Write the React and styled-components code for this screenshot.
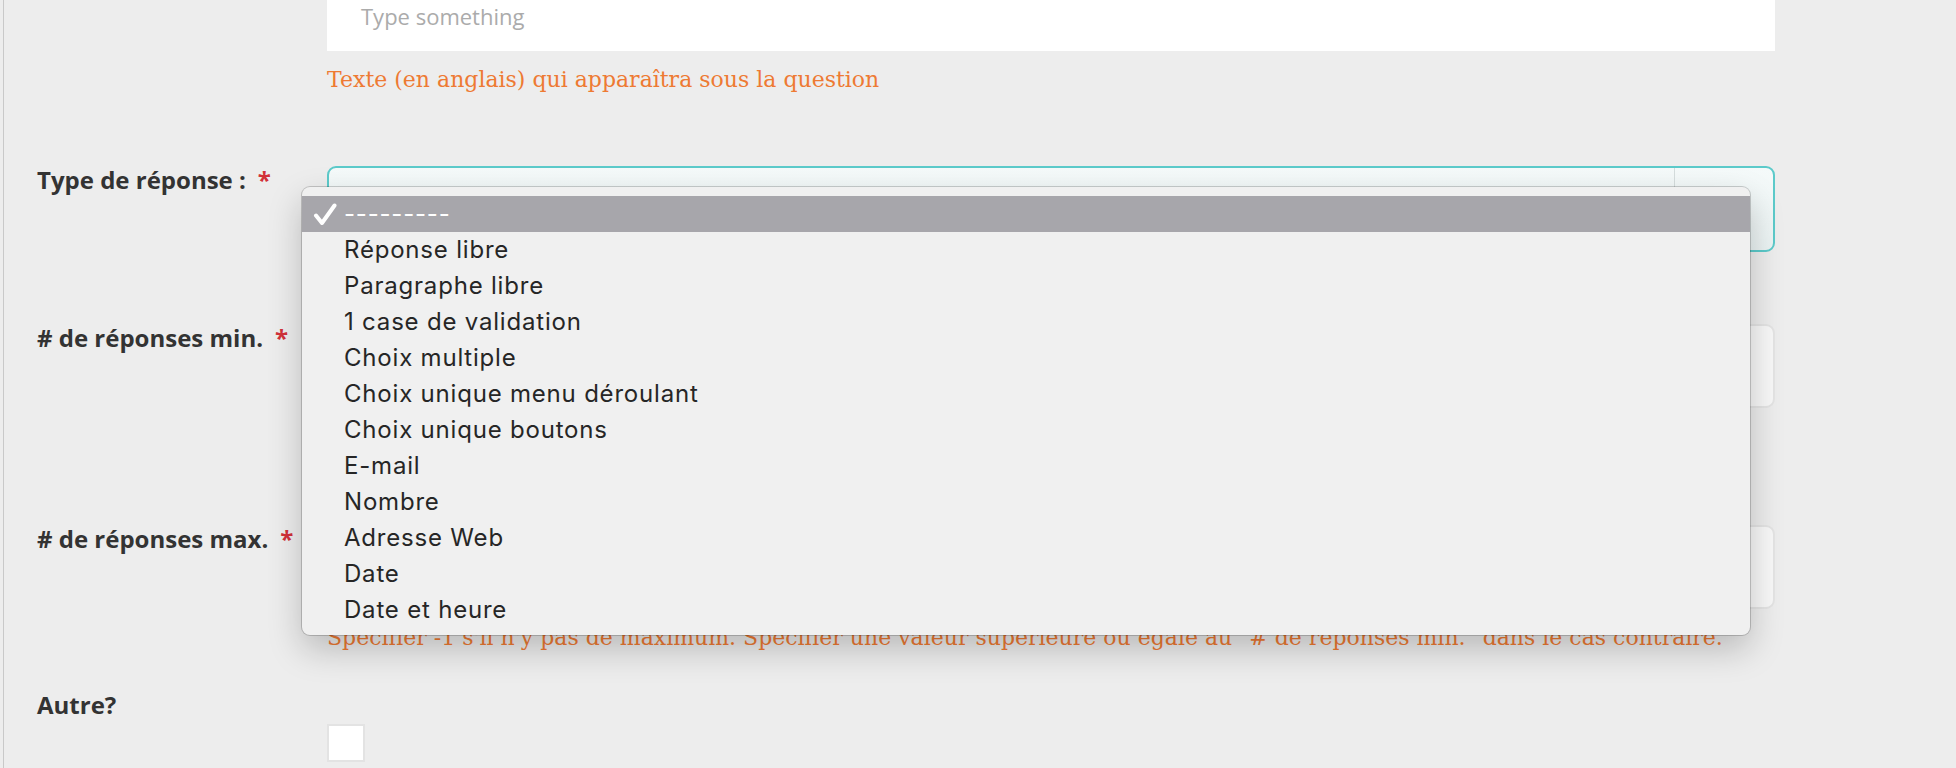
import React from 'react';
import styled, { createGlobalStyle } from 'styled-components';

const GlobalStyle = createGlobalStyle`
  html, body {
    margin:0;
    padding:0;
    background:#ededed;
    overflow:hidden;
  }
  * { box-sizing:border-box; }
`
const Page = styled.div`
  margin-left:3px;
  border-left:1px solid #c9c9c9;
  height:768px;
  padding-left:33px;
  font-family:"Open Sans", sans-serif;
`
const Row = styled.div`
  display:grid;
  grid-template-columns:290px 1448px;
  margin-top:${p => p.$gap || 0}px;
`
const Label = styled.label`
  display:block;
  grid-column:${p => p.$full ? '1 / -1' : 'auto'};
  padding-top:2px;
  font-size:24px;
  line-height:24px;
  font-weight:700;
  color:#333;
`
const Star = styled.span`
  color:#d23139;
  margin-left:12px;
`
const Field = styled.div`
  position:relative;
  grid-column:2;
`
const TextArea = styled.textarea`
  display:block;
  width:100%;
  height:51px;
  border:0;
  resize:none;
  outline:none;
  background:#fff;
  padding:0 34px;
  font-family:"Open Sans", sans-serif;
  font-size:22px;
  line-height:32px;
  color:#333;
  &::placeholder { color:#ababab; }
`
const Help = styled.p`
  margin:15px 0 0;
  font-family:"DejaVu Serif", serif;
  font-size:22px;
  line-height:28px;
  color:#ee7a33;
  white-space:nowrap;
`
const SelectBox = styled.div`
  display:flex;
  justify-content:flex-end;
  height:86px;
  border:2px solid #5ccaca;
  border-radius:9px;
  background:linear-gradient(#f5fafa, #ebf3f3);
`
const ArrowZone = styled.div`
  width:99px;
  border-left:1px solid #d5dddd;
`
const Input = styled.input`
  display:block;
  width:100%;
  height:84px;
  border:2px solid #e4e4e4;
  border-radius:9px;
  background:#f8f8f8;
  outline:none;
`
const Checkbox = styled.input`
  appearance:none;
  display:block;
  margin:7px 0 0;
  width:38px;
  height:38px;
  background:#fff;
  border:2px solid #e3e3e3;
  border-radius:0;
`
const Menu = styled.ul`
  position:absolute;
  left:-25px;
  top:21px;
  width:1448px;
  margin:0;
  padding:9px 0 7px;
  list-style:none;
  background:#f0f0f0;
  border-radius:8px;
  box-shadow:0 0 0 1px rgba(0,0,0,0.18), 0 14px 34px rgba(0,0,0,0.22);
  z-index:5;
`
const Option = styled.li`
  position:relative;
  height:36px;
  line-height:35px;
  padding-left:42px;
  font-family:Inter, "Liberation Sans", sans-serif;
  font-size:24px;
  letter-spacing:0.8px;
  color:${p => p.$selected ? '#fff' : '#262626'};
  background:${p => p.$selected ? '#a7a6ab' : 'transparent'};
`
const Check = styled.svg`
  position:absolute;
  left:11px;
  top:7px;
`

const options = [
    '---------',
    'Réponse libre',
    'Paragraphe libre',
    '1 case de validation',
    'Choix multiple',
    'Choix unique menu déroulant',
    'Choix unique boutons',
    'E-mail',
    'Nombre',
    'Adresse Web',
    'Date',
    'Date et heure',
]

const App = () => {
    return (
        <>
        <GlobalStyle />
        <Page>
            <Row>
                <Field>
                    <TextArea placeholder="Type something" />
                    <Help>Texte (en anglais) qui apparaîtra sous la question</Help>
                </Field>
            </Row>
            <Row $gap={72}>
                <Label>Type de réponse :<Star>*</Star></Label>
                <Field>
                    <SelectBox><ArrowZone /></SelectBox>
                    <Menu>
                        {options.map((o, i) => (
                            <Option key={i} $selected={i === 0}>
                                {i === 0 && (
                                    <Check width="24" height="22" viewBox="0 0 24 22">
                                        <path d="M3 12.5 L9 20 L21.5 2.5" fill="none" stroke="#fff" strokeWidth="4" strokeLinecap="round" strokeLinejoin="round" />
                                    </Check>
                                )}
                                {o}
                            </Option>
                        ))}
                    </Menu>
                </Field>
            </Row>
            <Row $gap={72}>
                <Label># de réponses min.<Star>*</Star></Label>
                <Field>
                    <Input type="text" />
                </Field>
            </Row>
            <Row $gap={117}>
                <Label># de réponses max.<Star>*</Star></Label>
                <Field>
                    <Input type="text" />
                    <Help>Spécifier -1 s'il n'y pas de maximum. Spécifier une valeur supérieure ou égale au "# de réponses min." dans le cas contraire.</Help>
                </Field>
            </Row>
            <Row $gap={39}>
                <Label $full>Autre?</Label>
                <Field>
                    <Checkbox type="checkbox" />
                </Field>
            </Row>
        </Page>
        </>
    )
}
export default App;
